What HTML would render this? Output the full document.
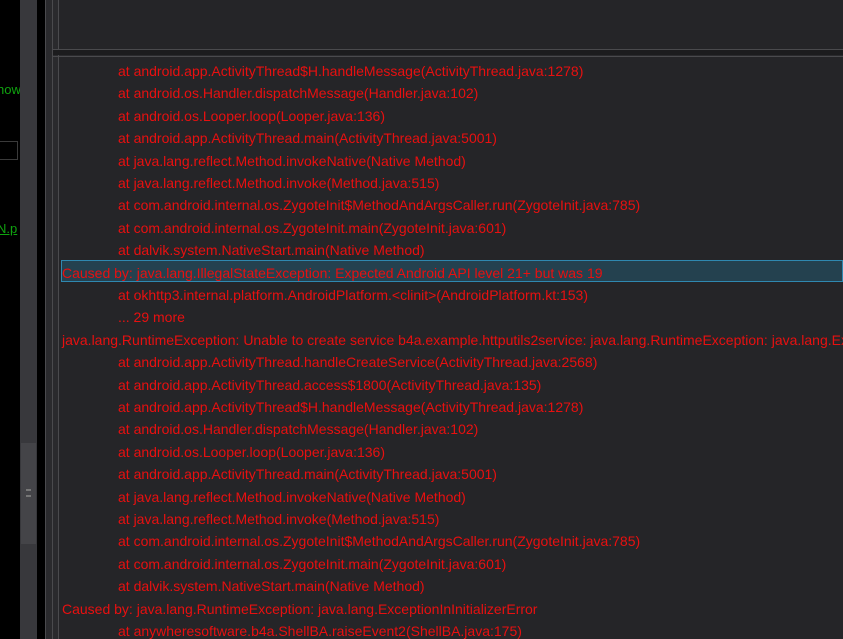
<!DOCTYPE html>
<html><head><meta charset="utf-8"><style>
*{margin:0;padding:0;box-sizing:border-box}
body{width:843px;height:639px;overflow:hidden;background:#000;position:relative;font-family:"Liberation Sans",sans-serif}
.a{position:absolute}
.log{position:absolute;left:59px;top:57px;right:0;bottom:0;background:#252528;overflow:hidden}
.l{position:absolute;white-space:nowrap;color:#e81010;font-size:14px;line-height:22px}
.i{left:59px}.n{left:3px}
.hl{position:absolute;left:2px;right:0;top:203px;height:22px;background:#24414f;border:1px solid #2f88b0}
</style></head><body>
<div class="a" style="left:0;top:0;width:20px;height:639px;background:#000"></div>
<div class="a" style="left:-3px;top:82px;color:#0fa30f;font-size:13px">how</div>
<div class="a" style="left:0;top:141px;width:18px;height:19px;border:1px solid #3a3a3a;border-left:none"></div>
<div class="a" style="left:-3px;top:221px;color:#0fa30f;font-size:13px;text-decoration:underline">N.p</div>
<div class="a" style="left:20px;top:0;width:17px;height:639px;background:#38383c"></div>
<div class="a" style="left:21px;top:443px;width:15px;height:101px;background:#444448"></div>
<div class="a" style="left:26px;top:489px;width:5px;height:8px;border-top:2px solid #777;border-bottom:2px solid #777"></div>
<div class="a" style="left:37px;top:0;width:8px;height:639px;background:#000"></div>
<div class="a" style="left:45px;top:0;width:798px;height:639px;background:#2a2a2d"></div>
<div class="a" style="left:45px;top:0;width:1px;height:639px;background:#4a4a4d"></div>
<div class="a" style="left:52px;top:0;width:1px;height:639px;background:#4a4a4d"></div>
<div class="a" style="left:58px;top:0;width:1px;height:639px;background:#4a4a4d"></div>
<div class="a" style="left:59px;top:0;width:784px;height:49px;background:#252528"></div>
<div class="a" style="left:53px;top:49px;width:790px;height:1px;background:#4a4a4d"></div>
<div class="a" style="left:53px;top:50px;width:790px;height:5px;background:#1c1c1e"></div>
<div class="a" style="left:53px;top:56px;width:790px;height:1px;background:#4a4a4d"></div>
<div class="log">
<div class="hl"></div>
<div class="l i" style="top:3px">at android.app.ActivityThread$H.handleMessage(ActivityThread.java:1278)</div>
<div class="l i" style="top:25.4px">at android.os.Handler.dispatchMessage(Handler.java:102)</div>
<div class="l i" style="top:47.8px">at android.os.Looper.loop(Looper.java:136)</div>
<div class="l i" style="top:70.2px">at android.app.ActivityThread.main(ActivityThread.java:5001)</div>
<div class="l i" style="top:92.6px">at java.lang.reflect.Method.invokeNative(Native Method)</div>
<div class="l i" style="top:115px">at java.lang.reflect.Method.invoke(Method.java:515)</div>
<div class="l i" style="top:137.4px">at com.android.internal.os.ZygoteInit$MethodAndArgsCaller.run(ZygoteInit.java:785)</div>
<div class="l i" style="top:159.8px">at com.android.internal.os.ZygoteInit.main(ZygoteInit.java:601)</div>
<div class="l i" style="top:182.2px">at dalvik.system.NativeStart.main(Native Method)</div>
<div class="l n" style="top:204.6px">Caused by: java.lang.IllegalStateException: Expected Android API level 21+ but was 19</div>
<div class="l i" style="top:227px">at okhttp3.internal.platform.AndroidPlatform.&lt;clinit&gt;(AndroidPlatform.kt:153)</div>
<div class="l i" style="top:249.4px">... 29 more</div>
<div class="l n" style="top:271.8px">java.lang.RuntimeException: Unable to create service b4a.example.httputils2service: java.lang.RuntimeException: java.lang.ExceptionInInitializerError</div>
<div class="l i" style="top:294.2px">at android.app.ActivityThread.handleCreateService(ActivityThread.java:2568)</div>
<div class="l i" style="top:316.6px">at android.app.ActivityThread.access$1800(ActivityThread.java:135)</div>
<div class="l i" style="top:339px">at android.app.ActivityThread$H.handleMessage(ActivityThread.java:1278)</div>
<div class="l i" style="top:361.4px">at android.os.Handler.dispatchMessage(Handler.java:102)</div>
<div class="l i" style="top:383.8px">at android.os.Looper.loop(Looper.java:136)</div>
<div class="l i" style="top:406.2px">at android.app.ActivityThread.main(ActivityThread.java:5001)</div>
<div class="l i" style="top:428.6px">at java.lang.reflect.Method.invokeNative(Native Method)</div>
<div class="l i" style="top:451px">at java.lang.reflect.Method.invoke(Method.java:515)</div>
<div class="l i" style="top:473.4px">at com.android.internal.os.ZygoteInit$MethodAndArgsCaller.run(ZygoteInit.java:785)</div>
<div class="l i" style="top:495.8px">at com.android.internal.os.ZygoteInit.main(ZygoteInit.java:601)</div>
<div class="l i" style="top:518.2px">at dalvik.system.NativeStart.main(Native Method)</div>
<div class="l n" style="top:540.6px">Caused by: java.lang.RuntimeException: java.lang.ExceptionInInitializerError</div>
<div class="l i" style="top:563px">at anywheresoftware.b4a.ShellBA.raiseEvent2(ShellBA.java:175)</div>
</div>
</body></html>
